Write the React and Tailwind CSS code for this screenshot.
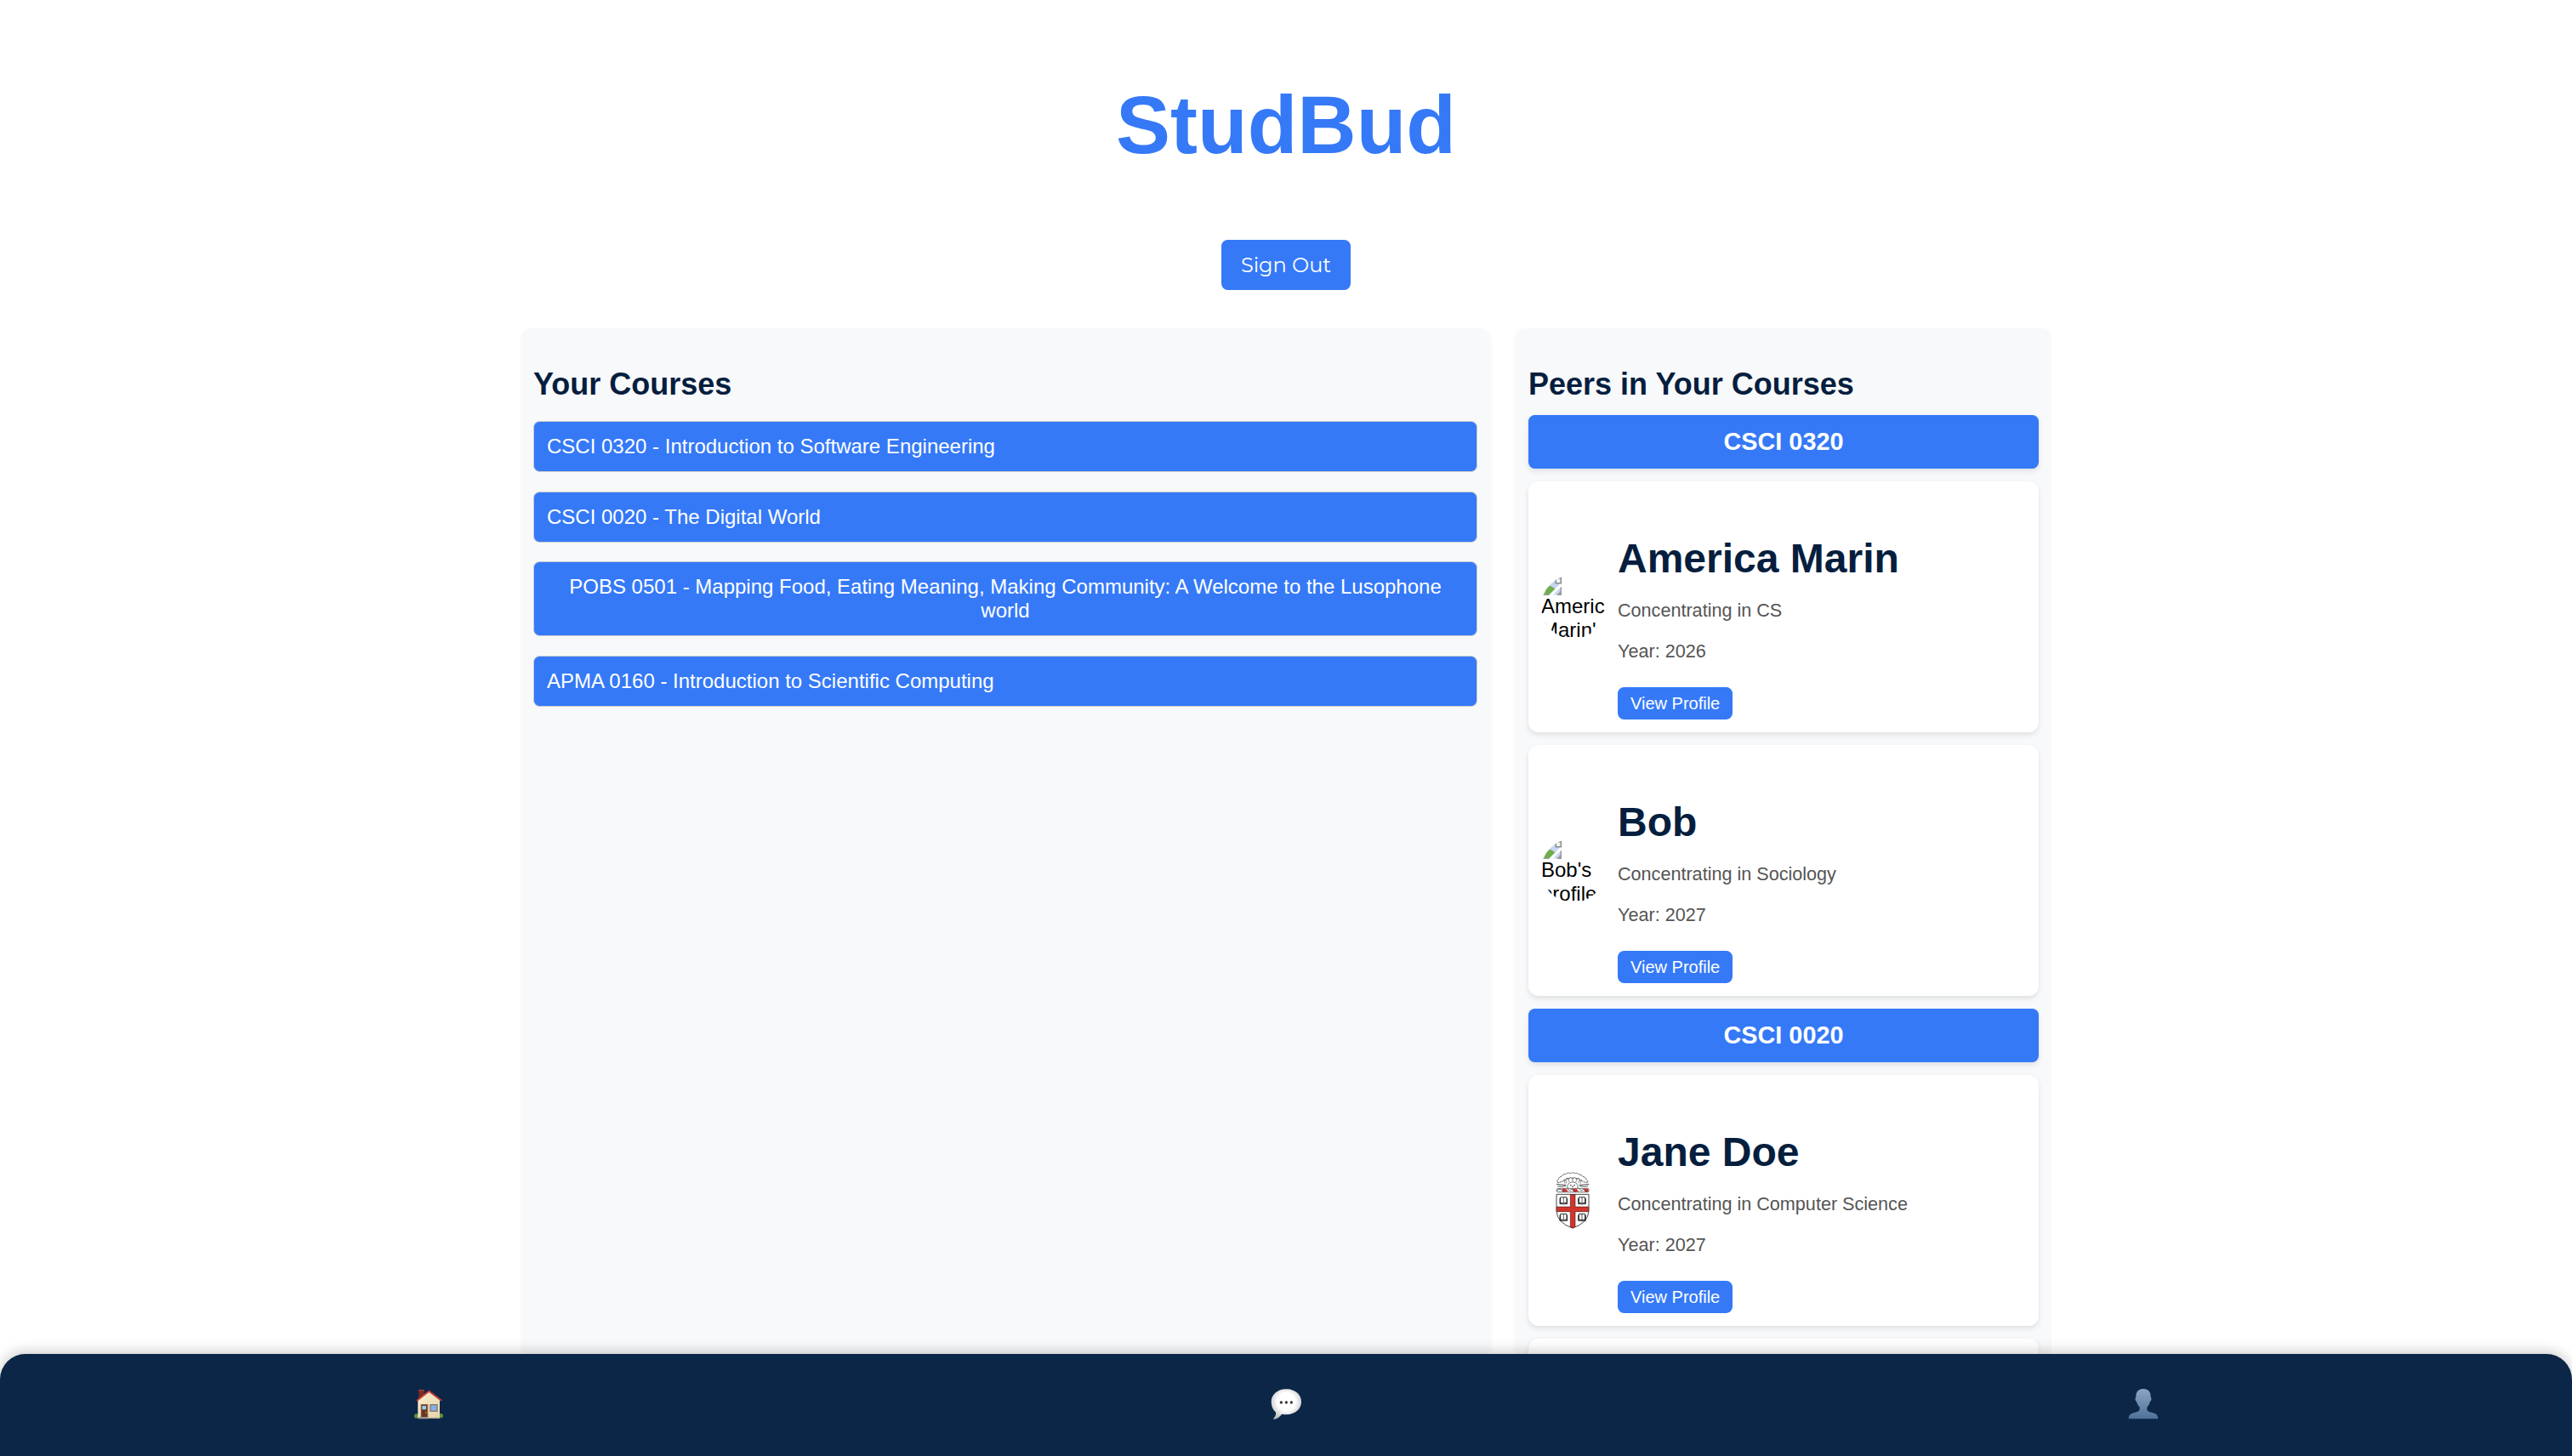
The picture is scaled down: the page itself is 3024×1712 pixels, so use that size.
const courses = [
  { title: "CSCI 0320 - Introduction to Software Engineering", gap: "mt-[23px]" },
  { title: "CSCI 0020 - The Digital World", gap: "mt-[23px]" },
  {
    title:
      "POBS 0501 - Mapping Food, Eating Meaning, Making Community: A Welcome to the Lusophone world",
    gap: "mt-[22px]",
  },
  { title: "APMA 0160 - Introduction to Scientific Computing", gap: "mt-[23px]" },
];

function BrokenImage({ alt }) {
  return (
    <div className="h-[75px] w-[75px] shrink-0 overflow-hidden rounded-full text-[24px] leading-7 text-black">
      <svg viewBox="0 0 16 16" className="block h-6 w-6">
        <path d="M0.5 2.5h11l4 4v9h-15z" fill="#c6d5f3" />
        <path d="M0 16v-3c2-3 5-5 8-4 2 1 3 2 4 3l-4 4z" fill="#6fae4c" />
        <path d="M0 16v-1h9v1zM15 16V4.500h1V16z" fill="#9a9a9a" />
        <path d="M11.500 2.500h4v4h-4z" fill="#f2f2f2" stroke="#8c8c8c" strokeWidth="1" />
        <path d="M7 16.500L16 7.500" stroke="#fff" strokeWidth="2.200" />
        <path d="M12 16l4-4v4z" fill="#9a9a9a" />
      </svg>
      <div className="-mt-px h-14 w-[75px]">{alt}</div>
    </div>
  );
}

function Book({ x, y }) {
  return (
    <g transform={`translate(${x} ${y})`} fill="#fff" stroke="#111" strokeWidth="2.800">
      <path d="M-11 -12q6 -3 11 0q5 -3 11 0v20q-6 -2 -11 1q-5 -3 -11 -1z" />
      <path d="M0 -12v20" strokeWidth="2" />
      <path d="M-13 -9v20h10q3 3 6 0h10v-20" strokeWidth="2.500" fill="none" />
    </g>
  );
}

function Crest() {
  return (
    <svg viewBox="36 42 225 225" className="h-[75px] w-[75px] shrink-0">
      <path
        d="M94 91q-4-7 3-11q1-9 11-10q4-8 13-8q10-7 19-3q8-5 15 0q10-2 14 4q10 0 13 7q11 2 12 10q8 4 6 11q-14 0-22-7q-14-9-32-9t-31 9q-8 7-21 7z"
        fill="#fff"
        stroke="#333"
        strokeWidth="2.500"
        strokeDasharray="6 1.500"
      />
      <path d="M121 95l-5-12 8 1 2-9 8 5 5-7 8 6 8-6 5 7 8-5 3 9 8-1-6 12" fill="#fff" stroke="#444" strokeWidth="2" />
      <path d="M127 94l-5-9M135 90l-5-11M147 88v-10M158 90l5-11M166 94l6-10" stroke="#555" strokeWidth="2" />
      <path d="M90 97q17 2 34 3M94 104q15 3 29-1M205 97q-18 2-35 3M201 104q-15 3-29-1" fill="none" stroke="#333" strokeWidth="2.500" />
      <path d="M129 111v-10q4-11 18-12q14 1 18 12v10" fill="#fff" stroke="#444" strokeWidth="2.200" />
      <path d="M138 101h5M151 101h5M147 103v5" stroke="#222" strokeWidth="3" />
      <rect x="91" y="112" width="113" height="13" rx="5" fill="#fff" stroke="#222" strokeWidth="2" />
      <path d="M108 113h14q6 4 9 11h-14q-8-3-9-11zM146 113h14q6 4 8 11h-14q-8-3-8-11zM187 113h14q3 5 2 11h-10q-7-4-6-11z" fill="#d2342c" />
      <path d="M92 120q7-7 13-5q3 7 13 9M128 114q7 9 18 1q4 9 12 9M170 115q6 9 17 0q5 9 11 9" fill="none" stroke="#222" strokeWidth="2" />
      <path d="M90 133h114v58q-2 43-57 61q-55-18-57-61z" fill="#fff" stroke="#222" strokeWidth="2.500" />
      <Book x={115} y={156} />
      <Book x={180} y={156} />
      <Book x={115} y={215} />
      <Book x={180} y={215} />
      <path d="M139 134h17v43h47v17h-47v54l-9 4-8-4v-54H91v-17h48z" fill="#d2342c" stroke="#3a1512" strokeWidth="1.800" />
    </svg>
  );
}

function CourseHeader({ children }) {
  return (
    <div className="rounded-[7.5px] bg-[#3579f7] p-[15px] text-center text-[28.8px] leading-[33px] font-bold text-white shadow-[0_3px_6px_rgba(0,0,0,0.1)]">
      {children}
    </div>
  );
}

function PeerCard({ avatar, name, field, year }) {
  return (
    <div className="flex items-center gap-[15px] rounded-xl bg-white p-[15px] shadow-[0_3px_6px_rgba(0,0,0,0.1)]">
      {avatar}
      <div>
        <h1 className="mt-12 text-[48px] leading-[55px] font-bold text-[#061e3e]">{name}</h1>
        <p className="mt-[21px] text-[21.6px] leading-[25px] text-[#555]">Concentrating in {field}</p>
        <p className="mt-[23px] text-[21.6px] leading-[25px] text-[#555]">Year: {year}</p>
        <button className="mt-[30px] block rounded-[7.5px] bg-[#3579f7] px-[15px] py-[7.5px] text-[20px] leading-[23px] text-white">
          View Profile
        </button>
      </div>
    </div>
  );
}

function HouseIcon() {
  return (
    <svg viewBox="78 66 108 114" className="h-[38px] w-9">
      <defs>
        <linearGradient id="wall" x1="0" y1="0" x2="1" y2="1">
          <stop offset="0" stopColor="#fdf0cf" />
          <stop offset="1" stopColor="#e3d3ad" />
        </linearGradient>
      </defs>
      <rect x="97" y="73" width="19" height="32" fill="#7c2a25" />
      <rect x="96" y="72" width="21" height="5" fill="#a63a33" />
      <circle cx="89" cy="165" r="8" fill="#5e9136" />
      <circle cx="175" cy="164" r="8" fill="#5e9136" />
      <path d="M94 109l40-31 37 31v64H94z" fill="url(#wall)" />
      <path d="M90 111l43-34 45 34" fill="none" stroke="#bd3a33" strokeWidth="6" />
      <rect x="104" y="123" width="26" height="45" fill="#8d6a50" />
      <rect x="107" y="126" width="19" height="42" fill="#6b3320" />
      <rect x="109" y="129" width="14" height="13" fill="#9ccbf0" />
      <circle cx="122" cy="153" r="2.500" fill="#d9a441" />
      <rect x="136" y="123" width="28" height="27" fill="#8f7762" />
      <rect x="140" y="127" width="20" height="19" fill="#7fb2e6" />
      <rect x="98" y="168" width="33" height="7" fill="#9a948c" />
      <rect x="131" y="170" width="38" height="4" fill="#b5a98e" />
    </svg>
  );
}

function ChatIcon() {
  return (
    <svg viewBox="72 66 108 114" className="h-[38px] w-9">
      <defs>
        <radialGradient id="bubble" cx="0.5" cy="0.42" r="0.6">
          <stop offset="0.5" stopColor="#ffffff" />
          <stop offset="1" stopColor="#bdbdbd" />
        </radialGradient>
      </defs>
      <path
        d="M127 70c30 0 53 19 53 45s-23 45-53 45c-6 0-11-1-15-2-8 10-18 17-28 18-3 0-3-2-1-4 5-5 8-12 7-20-10-8-16-21-16-37 0-26 23-45 53-45z"
        fill="url(#bubble)"
      />
      <circle cx="109" cy="117" r="5" fill="#3a3a3a" />
      <circle cx="127" cy="117" r="5" fill="#3a3a3a" />
      <circle cx="145" cy="117" r="5" fill="#3a3a3a" />
    </svg>
  );
}

function PersonIcon() {
  return (
    <svg viewBox="96 66 108 114" className="h-[38px] w-9">
      <defs>
        <linearGradient id="person" x1="0" y1="0" x2="0" y2="1">
          <stop offset="0" stopColor="#8aa6c3" />
          <stop offset="1" stopColor="#50719a" />
        </linearGradient>
      </defs>
      <path
        d="M150 69c17 0 27 11 26 29 4 2 3 13-2 16-2 9-6 15-11 20v8c1 7 9 9 19 11 13 3 19 8 20 22H98c1-14 7-19 20-22 10-2 18-4 19-11v-8c-5-5-9-11-11-20-5-3-6-14-2-16-1-18 9-29 26-29z"
        fill="url(#person)"
      />
    </svg>
  );
}

export default function App() {
  return (
    <div className="flex h-[1712px] w-[3024px] flex-col overflow-hidden bg-white font-['Liberation_Sans',Arial,sans-serif]">
      <header className="flex h-[386px] shrink-0 flex-col items-center pt-[92px]">
        <h1 className="text-[96px] leading-[110px] font-bold text-[#3579f7]">StudBud</h1>
        <button className="mt-20 h-[59px] w-[152px] rounded-[7.5px] bg-[#3579f7] font-['Montserrat','Inter',sans-serif] text-[24px] leading-[59px] text-white">
          Sign Out
        </button>
      </header>

      <main className="mx-auto flex h-[1206px] w-[1800px] shrink-0 gap-[30px] overflow-hidden">
        <section className="w-[1140px] rounded-xl bg-[#f8f9fb] px-[15px] pt-[45px] shadow-[0_3px_6px_rgba(0,0,0,0.05)]">
          <h2 className="text-[36px] leading-[41px] font-bold text-[#061e3e]">Your Courses</h2>
          <ul>
            {courses.map((c) => (
              <li
                key={c.title}
                className={`${c.gap} flex rounded-[7.5px] border border-[#ccc] bg-[#3579f7] p-[15px] text-center text-[24px] leading-7 text-white`}
              >
                {c.title}
              </li>
            ))}
          </ul>
        </section>

        <section className="w-[630px] overflow-hidden rounded-xl bg-[#f8f9fb] px-[15px] pt-[45px] shadow-[0_3px_6px_rgba(0,0,0,0.05)]">
          <h2 className="text-[36px] leading-[41px] font-bold text-[#061e3e]">Peers in Your Courses</h2>
          <div className="mt-4 flex flex-col gap-[15px]">
            <CourseHeader>CSCI 0320</CourseHeader>
            <PeerCard
              avatar={<BrokenImage alt="America Marin's profile" />}
              name="America Marin"
              field="CS"
              year="2026"
            />
            <PeerCard avatar={<BrokenImage alt="Bob's profile" />} name="Bob" field="Sociology" year="2027" />
            <CourseHeader>CSCI 0020</CourseHeader>
            <PeerCard avatar={<Crest />} name="Jane Doe" field="Computer Science" year="2027" />
            <div className="h-[295px] rounded-xl bg-white shadow-[0_3px_6px_rgba(0,0,0,0.1)]" />
          </div>
        </section>
      </main>

      <nav className="relative grid h-[120px] shrink-0 grid-cols-3 justify-items-center rounded-t-[30px] bg-[#0c2648] pt-10 shadow-[0_-3px_15px_rgba(0,0,0,0.2)]">
        <HouseIcon />
        <ChatIcon />
        <PersonIcon />
      </nav>
    </div>
  );
}
